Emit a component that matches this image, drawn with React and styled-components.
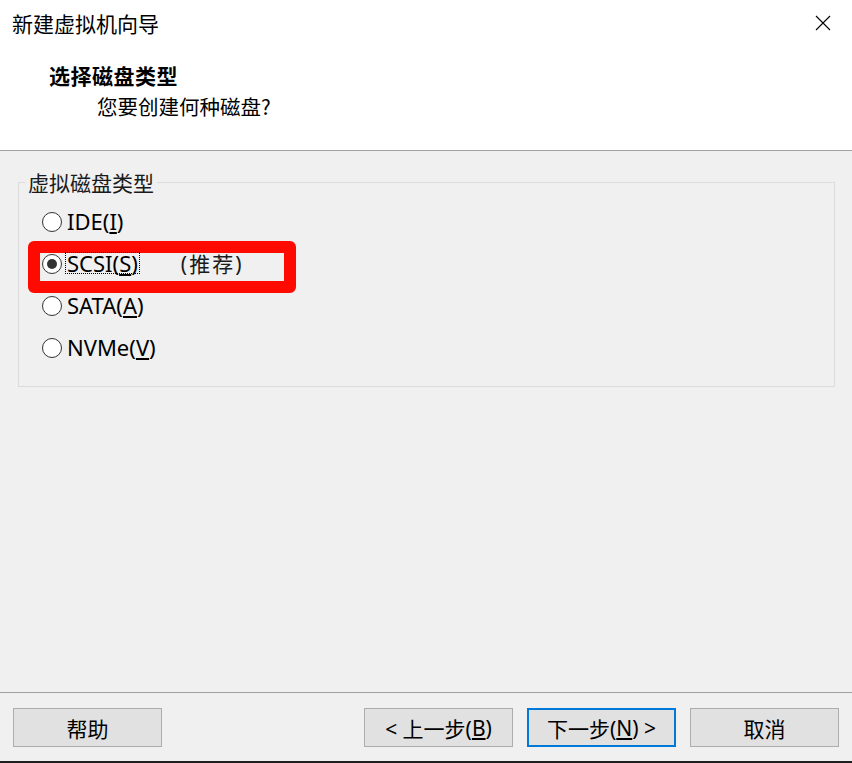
import React from 'react';
import styled, { createGlobalStyle, css } from 'styled-components';

const GlobalStyle = createGlobalStyle`
  html, body {
    margin: 0;
    padding: 0;
    background: #f0f0f0;
    overflow: hidden;
  }
`;

const CJK = `"Noto Sans CJK SC", "Noto Sans", sans-serif`;
const UI = `"Noto Sans", "Noto Sans CJK SC", sans-serif`;

const disks = [
    { key: 'ide', name: 'IDE', hot: 'I' },
    { key: 'scsi', name: 'SCSI', hot: 'S', checked: true, note: '(推荐)' },
    { key: 'sata', name: 'SATA', hot: 'A' },
    { key: 'nvme', name: 'NVMe', hot: 'V' },
];

const CloseIcon = () => (
    <svg width="16" height="16" viewBox="0 0 16 16">
        <path d="M1 1 L15 15 M15 1 L1 15" stroke="#000" strokeWidth="1.1" fill="none" />
    </svg>
);

const App = () => {
    return (
        <Window>
            <GlobalStyle />
            <Header>
                <TitleRow>
                    <Title>新建虚拟机向导</Title>
                    <CloseButton><CloseIcon /></CloseButton>
                </TitleRow>
                <Heading>选择磁盘类型</Heading>
                <SubHeading>您要创建何种磁盘?</SubHeading>
            </Header>

            <Content>
                <GroupBox>
                    <Legend>虚拟磁盘类型</Legend>
                    <Options>
                        { disks.map(d => (
                            <OptionRow key={ d.key } highlight={ d.checked ? 1 : 0 }>
                                <Radio checked={ d.checked ? 1 : 0 } />
                                <Label focused={ d.checked ? 1 : 0 }>
                                    { d.name }(<u>{ d.hot }</u>)
                                </Label>
                                { d.note && <Note>{ d.note }</Note> }
                            </OptionRow>
                        )) }
                    </Options>
                </GroupBox>
            </Content>

            <Footer>
                <Button>帮助</Button>
                <Spacer />
                <Button>&lt; 上一步(<u>B</u>)</Button>
                <Button primary={ 1 }>下一步(<u>N</u>) &gt;</Button>
                <Button>取消</Button>
            </Footer>
        </Window>
    );
}

export default App;

const Window = styled.div`
  width: 852px;
  height: 763px;
  box-sizing: border-box;
  display: flex;
  flex-direction: column;
  background: #f0f0f0;
  border-bottom: 2px solid #1e1e1e;
  color: #000;
  font-family: ${ UI };
`;

const Header = styled.div`
  height: 150px;
  flex-shrink: 0;
  background: #ffffff;
  border-bottom: 1px solid #a0a0a0;
`;
const TitleRow = styled.div`
  height: 46px;
  display: flex;
  align-items: center;
  justify-content: space-between;
  padding: 0 21px 0 12px;
`;
const Title = styled.div`
  font-family: ${ CJK };
  font-size: 21px;
  line-height: 28px;
`;
const CloseButton = styled.div`
  display: flex;
  align-items: center;
`;
const Heading = styled.div`
  margin: 15px 0 0 49px;
  font-family: ${ CJK };
  font-weight: 700;
  font-size: 21px;
  line-height: 28px;
  letter-spacing: 0.5px;
`;
const SubHeading = styled.div`
  margin: 3px 0 0 97px;
  font-family: ${ CJK };
  font-size: 20.5px;
  line-height: 28px;
`;

const Content = styled.div`
  flex: 1;
  padding: 19px 17px 0 18px;
`;
const GroupBox = styled.fieldset`
  margin: 0;
  padding: 7px 0 17px 6px;
  border: 1px solid #dcdcdc;
  min-width: 0;
`;
const Legend = styled.legend`
  padding: 0 3px;
  font-family: ${ CJK };
  font-size: 21px;
  line-height: 24px;
  color: #1a1a1a;
`;
const Options = styled.div`
  display: flex;
  flex-direction: column;
  padding-left: 17px;
`;
const OptionRow = styled.div`
  position: relative;
  height: 42px;
  display: flex;
  align-items: center;
  font-size: 22px;

  ${ ({ highlight }) => highlight ? css`
      &::before {
        content: '';
        position: absolute;
        left: -14px;
        top: -2px;
        width: 268px;
        height: 52px;
        box-sizing: border-box;
        border: 12px solid #fe0a00;
        border-radius: 6px;
      }
  ` : null }
`;
const Radio = styled.span`
  position: relative;
  width: 20px;
  height: 20px;
  box-sizing: border-box;
  border: 1px solid #333333;
  border-radius: 50%;
  background: #ffffff;
  flex-shrink: 0;

  ${ ({ checked }) => checked ? css`
      &::after {
        content: '';
        position: absolute;
        left: 4px;
        top: 4px;
        width: 10px;
        height: 10px;
        border-radius: 50%;
        background: #333333;
      }
  ` : null }
`;
const Label = styled.span`
  position: relative;
  margin: 0 0 2px 3px;
  padding: 0 1px;
  line-height: 20px;
  border: 1px dotted ${ ({ focused }) => focused ? '#000' : 'transparent' };
`;
const Note = styled.span`
  position: relative;
  margin: 0 0 2px 41px;
  font-family: ${ UI };
  font-size: 21px;
  letter-spacing: 2px;
  color: #1a1a1a;
`;

const Footer = styled.div`
  flex-shrink: 0;
  height: 53px;
  border-top: 1px solid #a0a0a0;
  display: flex;
  align-items: flex-start;
  gap: 14px;
  padding: 15px 13px 0 13px;
`;
const Spacer = styled.div`
  flex: 1;
`;
const Button = styled.div`
  width: 149px;
  height: 39px;
  box-sizing: border-box;
  display: flex;
  align-items: center;
  justify-content: center;
  background: #e1e1e1;
  border: 1px solid #adadad;
  font-family: ${ UI };
  font-size: 21px;
  color: #000;

  ${ ({ primary }) => primary ? `
      border: 2px solid #0078d7;
  ` : null }
`;
